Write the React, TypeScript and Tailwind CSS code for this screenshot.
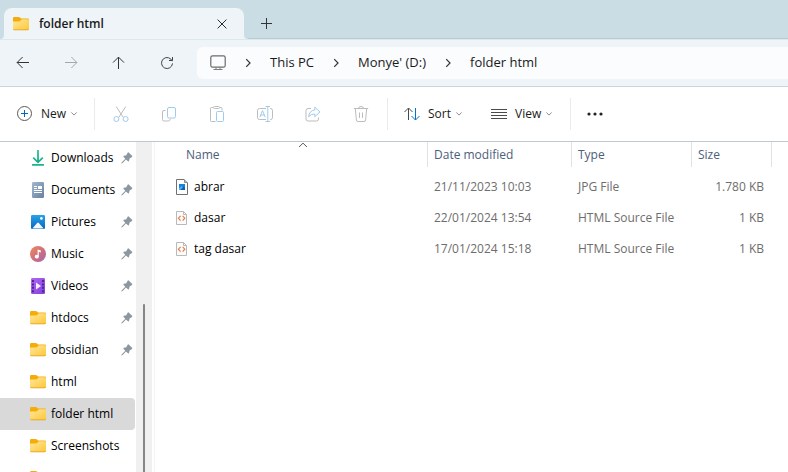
import React from "react";

type IconProps = { className?: string };

const Folder = ({ className = "" }: IconProps) => (
  <svg width="16" height="14" viewBox="0 0 16 14" className={`shrink-0 ${className}`} aria-hidden="true">
    <defs>
      <linearGradient id="folderBody" x1="0" y1="0" x2="1" y2="1">
        <stop offset="0" stopColor="#ffe69a" />
        <stop offset="1" stopColor="#fdc93a" />
      </linearGradient>
    </defs>
    <path d="M0 1.2Q0 0 1.2 0H5.6Q6.4 0 7 .6L8 1.6H14.8Q16 1.6 16 2.8V6H0Z" fill="#f4ab0c" />
    <path d="M0 4.4H6Q6.8 4.4 7.4 3.8L8.6 2.6Q9 2.2 9.8 2.2H15Q16 2.2 16 3.2V12Q16 13 15 13H1Q0 13 0 12Z" fill="url(#folderBody)" />
    <path d="M0 11.8Q0 13.2 1.2 13.2H14.8Q16 13.2 16 11.8Q15.8 12.4 14.8 12.4H1.2Q.2 12.4 0 11.8Z" fill="#e39a17" />
  </svg>
);

const Download = () => (
  <svg width="16" height="16" viewBox="0 0 16 16" className="shrink-0" fill="none" aria-hidden="true">
    <defs>
      <linearGradient id="dl" x1="0" y1="0" x2="0" y2="16" gradientUnits="userSpaceOnUse">
        <stop offset="0" stopColor="#2fc492" />
        <stop offset="1" stopColor="#0fa58c" />
      </linearGradient>
    </defs>
    <path d="M8 0V12M3.2 7.6L8 12.3L12.8 7.6" stroke="url(#dl)" strokeWidth="1.8" />
    <rect x="2" y="14" width="12" height="1.8" rx=".6" fill="#19b28e" />
  </svg>
);

const Documents = () => (
  <svg width="16" height="16" viewBox="0 0 16 16" className="shrink-0" aria-hidden="true">
    <defs>
      <linearGradient id="doc" x1="0" y1="0" x2="1" y2="1">
        <stop offset="0" stopColor="#a3b8cf" />
        <stop offset="1" stopColor="#67809f" />
      </linearGradient>
    </defs>
    <rect x="2" y="0" width="12" height="16" rx="1.2" fill="url(#doc)" />
    <path d="M4 4.5H7M4 6.5H7M4 8.5H12M4 10.5H12" stroke="#fff" />
    <rect x="8" y="4" width="4" height="3" fill="#fff" />
  </svg>
);

const Pictures = () => (
  <svg width="16" height="16" viewBox="0 0 16 16" className="shrink-0" aria-hidden="true">
    <defs>
      <linearGradient id="pic" x1="0" y1="0" x2="0" y2="1">
        <stop offset="0" stopColor="#28a3e8" />
        <stop offset="1" stopColor="#0a66c0" />
      </linearGradient>
    </defs>
    <rect x="1" y="1" width="14" height="14" rx="1.2" fill="url(#pic)" />
    <path d="M2.4 14.6L7.2 9Q8 8.2 8.8 9L13.6 14.6Z" fill="#f2f9ff" />
    <circle cx="11.4" cy="4.4" r="1.3" fill="#fff" />
  </svg>
);

const Music = () => (
  <svg width="16" height="16" viewBox="0 0 16 16" className="shrink-0" aria-hidden="true">
    <defs>
      <linearGradient id="mus" x1="0" y1="0" x2="1" y2="1">
        <stop offset="0" stopColor="#ee8d55" />
        <stop offset=".55" stopColor="#cd6d80" />
        <stop offset="1" stopColor="#a566b4" />
      </linearGradient>
    </defs>
    <circle cx="8" cy="8" r="8" fill="url(#mus)" />
    <path d="M7.6 3.4L10.8 4.4V6.4L8.8 5.8V10.6A2 1.9 0 1 1 7.6 8.9Z" fill="#fff" />
  </svg>
);

const Videos = () => (
  <svg width="16" height="16" viewBox="0 0 16 16" className="shrink-0" aria-hidden="true">
    <defs>
      <linearGradient id="vid" x1="0" y1="0" x2="1" y2="1">
        <stop offset="0" stopColor="#b566ee" />
        <stop offset="1" stopColor="#7f3fdd" />
      </linearGradient>
    </defs>
    <rect x="1" y="0" width="14" height="16" rx="1.2" fill="url(#vid)" />
    <path d="M2 2h2v2H2zM2 5.4h2v2H2zM2 8.8h2v2H2zM2 12.2h2v2H2zM12 2h2v2h-2zM12 5.4h2v2h-2zM12 8.8h2v2h-2zM12 12.2h2v2h-2z" fill="#4f2596" />
    <path d="M6 4.6L11 8L6 11.4Z" fill="#f4ecfd" />
  </svg>
);

const Pin = () => (
  <svg width="12" height="12" viewBox="0 0 12 12" className="shrink-0" aria-hidden="true">
    <path d="M6.8 .6Q7.4 .1 8 .7L11 3.7Q11.6 4.3 11 4.9L8.6 6.4L8 8.9Q7.5 9.8 6.7 9.1L5 7.4L1.4 11.2L.4 11.4L.6 10.4L4.3 6.7L2.6 5Q2 4.3 2.9 3.8L5.3 3.2Z" fill="#8b98a1" />
  </svg>
);

const Chevron = ({ className = "" }: IconProps) => (
  <svg width="6" height="4" viewBox="0 0 6 4" className={`shrink-0 ${className}`} fill="none" stroke="#8c8c8c" aria-hidden="true">
    <path d="M.3 .4L3 3.1L5.7 .4" />
  </svg>
);

const CrumbChevron = () => (
  <svg width="8" height="10" viewBox="0 0 8 10" className="shrink-0" fill="none" stroke="#333" strokeWidth="1.2" aria-hidden="true">
    <path d="M2.2 1.2L6 5L2.2 8.8" />
  </svg>
);

const JpgFile = () => (
  <svg width="12" height="16" viewBox="0 0 12 16" className="shrink-0" aria-hidden="true">
    <path d="M.5 .5H8L11.5 4V15.5H.5Z" fill="#fdfdfd" stroke="#707070" />
    <path d="M8.5 .5V3.5H11.5" fill="none" stroke="#8a8a8a" />
    <rect x="3" y="5" width="6" height="6" fill="#1683dc" />
    <path d="M3 11L7 7L9 9V11Z" fill="#1460b0" />
    <path d="M3 9.4L5.6 7L7 8.2L4.2 11H3Z" fill="#4db3f2" />
  </svg>
);

const HtmlFile = () => (
  <svg width="12" height="14" viewBox="0 0 12 14" className="shrink-0" fill="none" aria-hidden="true">
    <path d="M.5 .5H7.5L10.5 3.5V13.5H.5Z" fill="#fbfbfb" stroke="#b9b9b9" />
    <path d="M7.5 .5V3.5H10.5" stroke="#b9b9b9" />
    <path d="M4.6 4.8L2.4 7.2L4.6 9.6M6.6 4.8L8.8 7.2L6.6 9.6" stroke="#e0804c" strokeWidth="1.2" />
  </svg>
);

const places: { label: string; icon: React.ReactNode; pinned?: boolean; active?: boolean }[] = [
  { label: "Downloads", icon: <Download />, pinned: true },
  { label: "Documents", icon: <Documents />, pinned: true },
  { label: "Pictures", icon: <Pictures />, pinned: true },
  { label: "Music", icon: <Music />, pinned: true },
  { label: "Videos", icon: <Videos />, pinned: true },
  { label: "htdocs", icon: <Folder />, pinned: true },
  { label: "obsidian", icon: <Folder />, pinned: true },
  { label: "html", icon: <Folder /> },
  { label: "folder html", icon: <Folder />, active: true },
  { label: "Screenshots", icon: <Folder /> },
  { label: "", icon: <Folder /> },
];

const files = [
  { name: "abrar", date: "21/11/2023 10:03", type: "JPG File", size: "1.780 KB", icon: <JpgFile /> },
  { name: "dasar", date: "22/01/2024 13:54", type: "HTML Source File", size: "1 KB", icon: <HtmlFile /> },
  { name: "tag dasar", date: "17/01/2024 15:18", type: "HTML Source File", size: "1 KB", icon: <HtmlFile /> },
];

const GRAY = "#bdbdbd";
const BLUE = "#9fcbee";

const tools = [
  {
    name: "Cut",
    art: (
      <>
        <path d="M3.2 .5L10 11M12.8 .5L6 11" stroke={GRAY} />
        <circle cx="3.4" cy="13" r="2.5" stroke={BLUE} />
        <circle cx="12.6" cy="13" r="2.5" stroke={BLUE} />
      </>
    ),
  },
  {
    name: "Copy",
    art: (
      <>
        <path d="M4.5 4.5H3Q1.5 4.5 1.5 6V13.5Q1.5 15 3 15H7.5Q9 15 9.3 13" stroke={GRAY} />
        <rect x="6.5" y="1.5" width="8" height="10.5" rx="1.5" stroke={BLUE} />
      </>
    ),
  },
  {
    name: "Paste",
    art: (
      <>
        <path d="M6.5 15.5H2.5Q1.5 15.5 1.5 14.5V2.5Q1.5 1.5 2.5 1.5H4M11 1.5H12Q13 1.5 13 2.5V4.5" stroke={GRAY} />
        <rect x="4.5" y=".5" width="6" height="2" rx="1" stroke={GRAY} />
        <rect x="7.5" y="5.5" width="7" height="10" rx="1" stroke={BLUE} />
      </>
    ),
  },
  {
    name: "Rename",
    art: (
      <>
        <path d="M9 2.5H2.5Q.5 2.5 .5 4.5V11.5Q.5 13.5 2.5 13.5H9M13 2.5H13.5Q15.5 2.5 15.5 4.5V11.5Q15.5 13.5 13.5 13.5H13" stroke={GRAY} />
        <path d="M8.5 .5H13M10.8 .5V15.5M8.5 15.5H13" stroke={BLUE} />
        <path d="M2.8 11.2L5.5 4.6L8.2 11.2M3.8 9H7.2" stroke={BLUE} />
      </>
    ),
  },
  {
    name: "Share",
    art: (
      <>
        <path d="M6 2.5H3Q1 2.5 1 4.5V13Q1 15 3 15H11.5Q13.5 15 13.5 13V11.5" stroke={GRAY} />
        <path d="M9.8 1.2L15 6L9.8 10.6V8Q6 7.6 3.6 10.8Q4.2 4.6 9.8 4Z" stroke={BLUE} strokeLinejoin="round" />
      </>
    ),
  },
  {
    name: "Delete",
    art: (
      <path d="M.8 2.5H15.2M5.5 2.5Q5.5 .5 8 .5Q10.5 .5 10.5 2.5M2.3 2.5L3.4 14Q3.6 15.5 5 15.5H11Q12.4 15.5 12.6 14L13.7 2.5M6.5 6.5V12M9.5 6.5V12" stroke={GRAY} />
    ),
  },
];

const Divider = () => <div className="h-8 w-px shrink-0 bg-[#ebebeb]" />;

const crumbs = ["This PC", "Monye' (D:)", "folder html"];

export default function App() {
  return (
    <div className="flex h-screen flex-col overflow-hidden bg-white font-['Open_Sans','Noto_Sans',sans-serif] text-xs text-black">
      <header className="shrink-0 bg-[#cbdde4]">
        <div className="flex h-[39px] items-end">
          <svg width="4" height="4" viewBox="0 0 4 4" className="shrink-0" aria-hidden="true">
            <path d="M4 0Q4 4 0 4H4Z" fill="#eff4f8" />
          </svg>
          <div className="flex h-[31px] w-60 shrink-0 items-center rounded-t-lg bg-[#eff4f8] pl-[9px] pr-3">
            <Folder />
            <span className="ml-[10px] flex-1 font-semibold text-[#1a1a1a]">folder html</span>
            <button type="button" aria-label="Close tab" className="flex size-5 items-center justify-center">
              <svg width="10" height="10" viewBox="0 0 10 10" stroke="#2b2b2b" aria-hidden="true">
                <path d="M.6 .6L9.4 9.4M9.4 .6L.6 9.4" />
              </svg>
            </button>
          </div>
          <svg width="4" height="4" viewBox="0 0 4 4" className="shrink-0" aria-hidden="true">
            <path d="M0 0Q0 4 4 4H0Z" fill="#eff4f8" />
          </svg>
          <div className="flex h-[31px] flex-1 items-center border-b border-[#b9ccd4] pl-2">
            <button type="button" aria-label="New tab" className="flex size-5 items-center justify-center">
              <svg width="11" height="11" viewBox="0 0 11 11" stroke="#333" aria-hidden="true">
                <path d="M5.5 0V11M0 5.5H11" />
              </svg>
            </button>
          </div>
        </div>
      </header>

      <div className="flex shrink-0 items-center border-b border-t border-b-[#c8d5db] border-t-[#dde8ed] bg-[#eff4f8] py-[7px] pl-[7px]">
        <div className="flex gap-4">
          <button type="button" aria-label="Back" className="flex size-8 items-center justify-center">
            <svg width="14" height="14" viewBox="0 0 14 14" fill="none" stroke="#333" aria-hidden="true">
              <path d="M13 6.5H1.2M6.6 1L1.1 6.5L6.6 12" />
            </svg>
          </button>
          <button type="button" aria-label="Forward" className="flex size-8 items-center justify-center">
            <svg width="14" height="14" viewBox="0 0 14 14" fill="none" stroke="#a3a8ab" aria-hidden="true">
              <path d="M1 6.5H12.8M7.4 1L12.9 6.5L7.4 12" />
            </svg>
          </button>
          <button type="button" aria-label="Up" className="flex size-8 items-center justify-center">
            <svg width="14" height="14" viewBox="0 0 14 14" fill="none" stroke="#333" aria-hidden="true">
              <path d="M6.5 13V1.2M1 6.6L6.5 1.1L12 6.6" />
            </svg>
          </button>
          <button type="button" aria-label="Refresh" className="flex size-8 items-center justify-center">
            <svg width="14" height="14" viewBox="0 0 14 14" fill="none" stroke="#444" aria-hidden="true">
              <path d="M12.2 5.2A5.5 5.5 0 1 0 12.5 7.4M12.5 1V4.5H9" />
            </svg>
          </button>
        </div>
        <nav aria-label="Address" className="ml-[14px] flex h-8 min-w-0 flex-1 items-center gap-[18px] rounded-l-md bg-[#fbfcfe] pl-[13px] text-[13px] text-[#1a1a1a]">
          <svg width="16" height="16" viewBox="0 0 16 16" fill="none" className="shrink-0" aria-hidden="true">
            <rect x=".8" y=".8" width="14.4" height="11.4" rx="1.8" stroke="#6b6b6b" strokeWidth="1.2" />
            <path d="M6 12.5V14.5M10 12.5V14.5M3.5 14.5H12.5" stroke="#7d7d7d" />
          </svg>
          {crumbs.map((crumb) => (
            <React.Fragment key={crumb}>
              <CrumbChevron />
              <a href="#" className="whitespace-nowrap">{crumb}</a>
            </React.Fragment>
          ))}
        </nav>
      </div>

      <div role="toolbar" aria-label="Commands" className="flex h-[55px] shrink-0 items-center border-b border-[#bccacf] pl-4 text-[#1a1a1a]">
        <button type="button" className="flex w-[78px] shrink-0 items-center">
          <svg width="16" height="16" viewBox="0 0 16 16" fill="none" aria-hidden="true">
            <circle cx="8.5" cy="7.5" r="7" stroke="#5a5a5a" />
            <path d="M8.5 4V11M5 7.5H12" stroke="#0067c0" />
          </svg>
          <span className="ml-[9px]">New</span>
          <Chevron className="ml-[5px]" />
        </button>
        <Divider />
        <div className="mx-[10px] flex gap-4">
          {tools.map((tool) => (
            <button key={tool.name} type="button" aria-label={tool.name} disabled className="flex size-8 items-center justify-center">
              <svg width="16" height="16" viewBox="0 0 16 16" fill="none" className="overflow-visible" aria-hidden="true">
                {tool.art}
              </svg>
            </button>
          ))}
        </div>
        <Divider />
        <button type="button" className="ml-4 flex w-[87px] shrink-0 items-center">
          <svg width="16" height="14" viewBox="0 0 16 14" fill="none" aria-hidden="true">
            <path d="M4.5 13V1.2M.5 5L4.5 1L8.5 5" stroke="#4a4a4a" />
            <path d="M11.5 1V12.8M7.5 9L11.5 13L15.5 9" stroke="#0073d1" />
          </svg>
          <span className="ml-2">Sort</span>
          <Chevron className="ml-[5px]" />
        </button>
        <button type="button" className="flex w-[79px] shrink-0 items-center">
          <svg width="16" height="12" viewBox="0 0 16 12" stroke="#4a4a4a" aria-hidden="true">
            <path d="M0 1.5H16M0 4.5H16M0 7.5H16M0 10.5H16" />
          </svg>
          <span className="ml-2">View</span>
          <Chevron className="ml-[5px]" />
        </button>
        <Divider />
        <button type="button" aria-label="See more" className="ml-4 flex shrink-0 items-center">
          <svg width="16" height="4" viewBox="0 0 16 4" fill="#222" aria-hidden="true">
            <circle cx="2" cy="2" r="1.6" />
            <circle cx="8" cy="2" r="1.6" />
            <circle cx="14" cy="2" r="1.6" />
          </svg>
        </button>
      </div>

      <div className="flex min-h-0 flex-1">
        <nav aria-label="Places" className="w-[136px] shrink-0 overflow-hidden pr-px">
          <ul>
            {places.map((place) => (
              <li key={place.label}>
                <a href="#" className={`flex h-8 items-center rounded-r-sm pl-[30px] pr-0.5 ${place.active ? "bg-[#d9d9d9]" : ""}`}>
                  {place.icon}
                  <span className="ml-[5px] flex-1 whitespace-nowrap">{place.label}</span>
                  {place.pinned && <Pin />}
                </a>
              </li>
            ))}
          </ul>
        </nav>
        <div className="flex w-4 shrink-0 flex-col items-center bg-[#f0f0f0] pt-[162px]">
          <div className="w-0.5 flex-1 rounded-t-sm bg-[#858585]" />
        </div>
        <main className="ml-0.5 min-w-0 flex-1 border-l border-[#f3f3f3]">
          <table className="w-full table-fixed border-separate border-spacing-0 text-left">
            <colgroup>
              <col className="w-[273px]" />
              <col className="w-36" />
              <col className="w-30" />
              <col className="w-20" />
              <col />
            </colgroup>
            <thead className="text-[#4c607a]">
              <tr className="h-[25px]">
                <th scope="col" aria-sort="ascending" className="border-r border-[#e2e2e2] p-0 pl-6 font-normal">
                  <button type="button" className="relative flex h-[25px] w-full items-center pl-[7px]">
                    Name
                    <svg width="9" height="6" viewBox="0 0 9 6" fill="none" stroke="#555" className="absolute left-1/2 top-0 -translate-x-1/2" aria-hidden="true">
                      <path d="M.6 5L4.5 1.1L8.4 5" />
                    </svg>
                  </button>
                </th>
                <th scope="col" className="border-r border-[#e2e2e2] p-0 pl-1.5 font-normal">Date modified</th>
                <th scope="col" className="border-r border-[#e2e2e2] p-0 pl-1.5 font-normal">Type</th>
                <th scope="col" className="border-r border-[#e2e2e2] p-0 pl-1.5 font-normal">Size</th>
                <td />
              </tr>
            </thead>
            <tbody className="text-[#6d6d6d] before:block before:h-1">
              {files.map((file) => (
                <tr key={file.name} className="h-[31px]">
                  <td className="p-0 pl-[21px] text-black">
                    <div className="flex items-center gap-1.5">
                      {file.icon}
                      {file.name}
                    </div>
                  </td>
                  <td className="p-0 pl-1.5">{file.date}</td>
                  <td className="p-0 pl-1.5">{file.type}</td>
                  <td className="p-0 pr-2 text-right">{file.size}</td>
                  <td />
                </tr>
              ))}
            </tbody>
          </table>
        </main>
      </div>
    </div>
  );
}
